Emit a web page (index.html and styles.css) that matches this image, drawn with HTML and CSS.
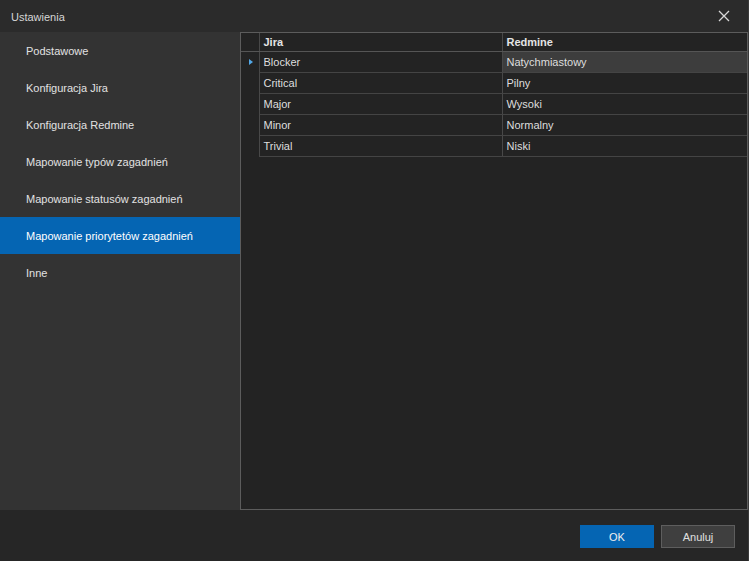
FILE: index.html
```html
<!DOCTYPE html>
<html lang="pl">
<head>
<meta charset="utf-8">
<title>Ustawienia</title>
<link rel="stylesheet" href="styles.css">
</head>
<body>
<div class="window">
  <div class="titlebar">
    <span class="title">Ustawienia</span>
    <svg class="close" width="12" height="12" viewBox="0 0 12 12"><path d="M1 1L11 11M11 1L1 11" stroke="#d8d8d8" stroke-width="1.3" fill="none"/></svg>
  </div>
  <div class="main">
    <nav class="sidebar">
      <div class="nav-item">Podstawowe</div>
      <div class="nav-item">Konfiguracja Jira</div>
      <div class="nav-item">Konfiguracja Redmine</div>
      <div class="nav-item">Mapowanie typów zagadnień</div>
      <div class="nav-item">Mapowanie statusów zagadnień</div>
      <div class="nav-item active">Mapowanie priorytetów zagadnień</div>
      <div class="nav-item">Inne</div>
    </nav>
    <div class="grid">
      <table class="table">
        <thead>
          <tr><th class="rh"></th><th class="c1">Jira</th><th class="c2">Redmine</th></tr>
        </thead>
        <tbody>
          <tr><td class="rh"><span class="arrow"></span></td><td>Blocker</td><td class="sel">Natychmiastowy</td></tr>
          <tr><td class="rh"></td><td>Critical</td><td>Pilny</td></tr>
          <tr><td class="rh"></td><td>Major</td><td>Wysoki</td></tr>
          <tr><td class="rh"></td><td>Minor</td><td>Normalny</td></tr>
          <tr><td class="rh"></td><td>Trivial</td><td>Niski</td></tr>
        </tbody>
      </table>
    </div>
  </div>
  <div class="footer">
    <button class="btn primary">OK</button>
    <button class="btn">Anuluj</button>
  </div>
</div>
</body>
</html>
```
FILE: styles.css
```css
* { box-sizing: border-box; }
html, body { margin: 0; padding: 0; }
body {
  width: 749px;
  height: 561px;
  background: #262626;
  font-family: "Liberation Sans", Arial, sans-serif;
  font-size: 11px;
  color: #dedede;
  overflow: hidden;
}
.window {
  width: 749px;
  height: 561px;
  display: flex;
  flex-direction: column;
  border-right: 1px solid #3a3a3a;
}
.titlebar {
  height: 32px;
  flex: none;
  background: #2b2b2b;
  display: flex;
  align-items: center;
  justify-content: space-between;
  padding: 0 18px 0 11px;
}
.title { color: #d6d6d6; padding-top: 1px; }
.close { display: block; }
.main {
  height: 478px;
  flex: none;
  display: flex;
}
.sidebar {
  width: 240px;
  flex: none;
  background: #333333;
  display: flex;
  flex-direction: column;
}
.nav-item {
  height: 37px;
  flex: none;
  display: flex;
  align-items: center;
  padding-left: 26px;
  color: #e2e2e2;
}
.nav-item.active { background: #0565b3; color: #ffffff; }
.grid {
  flex: 1;
  background: #232323;
  border: 1px solid #5c5c5c;
}
.table {
  border-collapse: collapse;
  width: 100%;
  table-layout: fixed;
}
.table th, .table td {
  height: 21px;
  padding: 0 0 0 4px;
  text-align: left;
  border-right: 1px solid #484848;
  border-bottom: 1px solid #444444;
  white-space: nowrap;
  overflow: hidden;
  vertical-align: middle;
}
.table th {
  height: 18px;
  font-weight: bold;
  color: #e4e4e4;
  border-bottom-color: #555555;
}
.table th.rh, .table td.rh { width: 18px; padding: 0; border-bottom: none; }
.table th.rh { border-bottom: 1px solid #555555; }
.table th.c1 { width: 243px; }
.table th:last-child, .table td:last-child { border-right: none; }
.table td.sel { background: #3d3d3d; }
.arrow {
  display: block;
  width: 0; height: 0;
  margin-left: 8px;
  border-top: 3.5px solid transparent;
  border-bottom: 3.5px solid transparent;
  border-left: 4px solid #52a8e8;
}
.footer {
  flex: 1;
  background: #262626;
  display: flex;
  justify-content: flex-end;
  align-items: flex-start;
  gap: 7px;
  padding: 15px 13px 0 0;
}
.btn {
  width: 74px;
  height: 23px;
  font-family: inherit;
  font-size: 11px;
  color: #e0e0e0;
  background: #3f3f3f;
  border: 1px solid #5e5e5e;
  padding: 0;
}
.btn.primary { background: #0565b3; border-color: #0565b3; color: #f0f0f0; }
```
